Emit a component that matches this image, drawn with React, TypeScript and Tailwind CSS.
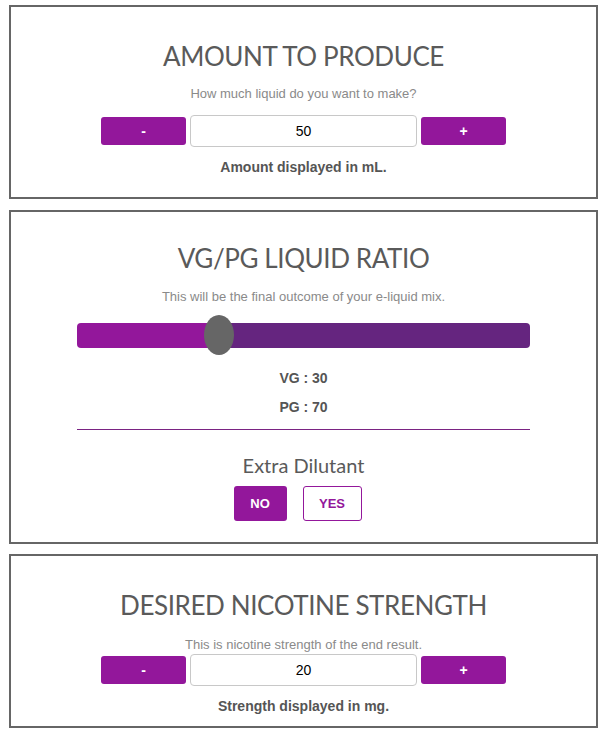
const Stepper = ({ value }: { value: string }) => (
  <div className="flex items-center justify-center gap-[4px]">
    <button className="w-[85px] h-[28px] rounded-[3px] bg-[#93179b] text-white font-bold text-[14px]">-</button>
    <input
      readOnly
      value={value}
      className="w-[227px] h-[32px] rounded-[4px] border border-[#c8c8c8] bg-white text-center text-[14px] text-black outline-none"
    />
    <button className="w-[85px] h-[28px] rounded-[3px] bg-[#93179b] text-white font-bold text-[14px]">+</button>
  </div>
);

const Title = ({ children }: { children: React.ReactNode }) => (
  <h2 className="font-['Lato',sans-serif] text-[26px] leading-[31px] text-[#5a5a5a] tracking-[-0.4px]">{children}</h2>
);

const Sub = ({ children }: { children: React.ReactNode }) => (
  <p className="text-[13px] leading-[18px] text-[#8a8a8a]">{children}</p>
);

const Note = ({ children }: { children: React.ReactNode }) => (
  <p className="text-[14px] leading-[18px] font-bold text-[#555]">{children}</p>
);

export default function App() {
  const vg = 30;
  return (
    <div className="bg-white min-h-screen pl-[9px] pr-[8px] pt-[5px] font-['Liberation_Sans',Arial,sans-serif]">
      <section className="border-2 border-[#666] text-center pt-[34px] pb-[21px]">
        <Title>AMOUNT TO PRODUCE</Title>
        <div className="mt-[13px]"><Sub>How much liquid do you want to make?</Sub></div>
        <div className="mt-[12px]"><Stepper value="50" /></div>
        <div className="mt-[11px]"><Note>Amount displayed in mL.</Note></div>
      </section>

      <section className="mt-[11px] border-2 border-[#666] text-center pt-[31px] pb-[21px]">
        <Title>VG/PG LIQUID RATIO</Title>
        <div className="mt-[14px]"><Sub>This will be the final outcome of your e-liquid mix.</Sub></div>
        <div className="mx-[66px] mt-[9px] relative h-[40px] flex items-center">
          <div className="w-full h-[25px] rounded-[4px] flex overflow-hidden">
            <div className="bg-[#93179b]" style={{ width: `${vg + 1}%` }} />
            <div className="flex-1 bg-[#65257f]" />
          </div>
          <div
            className="absolute top-0 h-[40px] w-[30px] rounded-[50%] bg-[#666] -translate-x-1/2"
            style={{ left: `${vg + 1.4}%` }}
          />
        </div>
        <div className="mt-[14px]"><Note>VG : 30</Note></div>
        <div className="mt-[11px]"><Note>PG : 70</Note></div>
        <div className="mx-[66px] mt-[13px] h-px bg-[#7a2383]" />
        <h3 className="mt-[24px] font-['Lato',sans-serif] text-[20px] leading-[23px] text-[#5a5a5a]">Extra Dilutant</h3>
        <div className="mt-[9px] flex justify-center gap-[16px] pr-[12px]">
          <button className="w-[53px] h-[35px] rounded-[3px] bg-[#93179b] text-white font-bold text-[13px]">NO</button>
          <button className="w-[59px] h-[35px] rounded-[3px] border border-[#93179b] bg-white text-[#93179b] font-bold text-[13px]">YES</button>
        </div>
      </section>

      <section className="mt-[10px] border-2 border-[#666] text-center pt-[34px] pb-[11px]">
        <Title>DESIRED NICOTINE STRENGTH</Title>
        <div className="mt-[15px]"><Sub>This is nicotine strength of the end result.</Sub></div>
        <div><Stepper value="20" /></div>
        <div className="mt-[11px]"><Note>Strength displayed in mg.</Note></div>
      </section>
    </div>
  );
}
